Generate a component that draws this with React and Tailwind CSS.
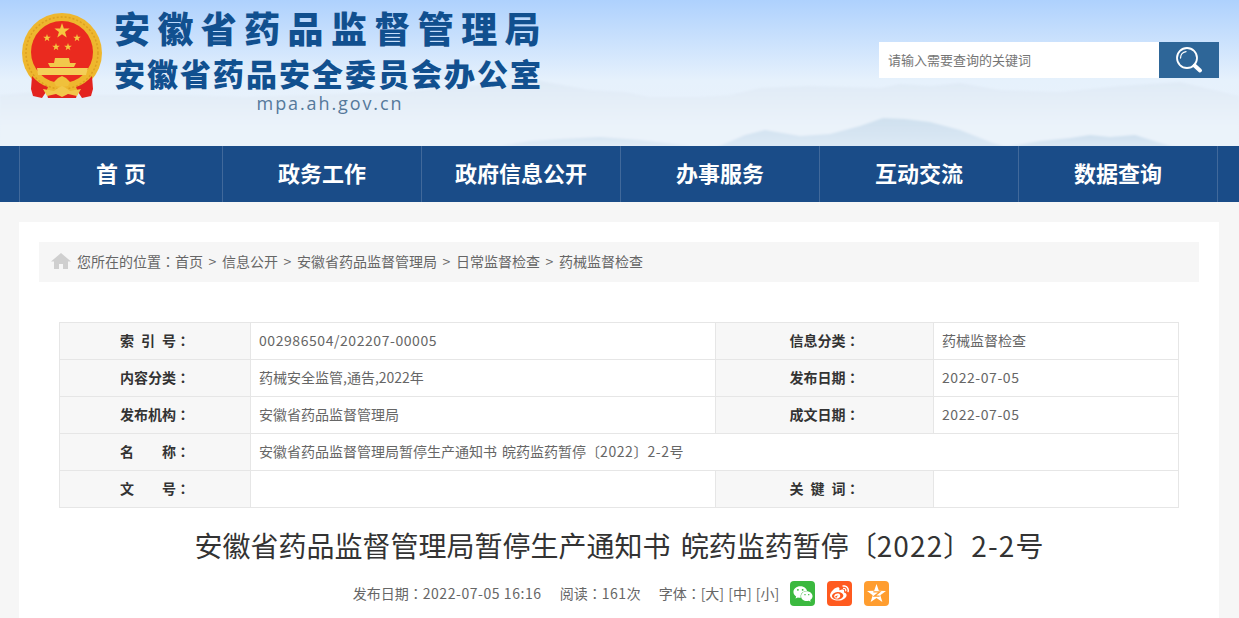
import React from "react";
import { FaWeibo, FaWeixin } from "react-icons/fa";

const navItems = ["首 页", "政务工作", "政府信息公开", "办事服务", "互动交流", "数据查询"];
const crumbs = ["信息公开", "安徽省药品监督管理局", "日常监督检查", "药械监督检查"];

const star = (cx, cy, r) => {
  const pts = [];
  for (let i = 0; i < 10; i++) {
    const rad = i % 2 === 0 ? r : r * 0.4;
    const a = (Math.PI / 5) * i - Math.PI / 2;
    pts.push(`${(cx + rad * Math.cos(a)).toFixed(2)},${(cy + rad * Math.sin(a)).toFixed(2)}`);
  }
  return pts.join(" ");
};

const Emblem = () => (
  <svg width="84" height="90" viewBox="20 10 84 90" className="shrink-0">
    <circle cx="62" cy="52" r="40" fill="#eeb72e" />
    <circle cx="62" cy="52" r="36" fill="none" stroke="#dc9f20" strokeWidth="1.5" strokeDasharray="2 2" />
    <circle cx="62" cy="51" r="31" fill="#ea2a1f" />
    <polygon points={star(62, 30, 8)} fill="#f6c73f" />
    <polygon points={star(47, 37, 4)} fill="#f6c73f" />
    <polygon points={star(77, 37, 4)} fill="#f6c73f" />
    <polygon points={star(56, 46, 4)} fill="#f6c73f" />
    <polygon points={star(68, 46, 4)} fill="#f6c73f" />
    <path d="M48 62 L54 62 L55 57 L69 57 L70 62 L76 62 L74 66 L50 66 Z" fill="#f2c84b" />
    <path d="M37 67 L88 67 L86 74 L38 74 Z" fill="#f4cf58" />
    <path d="M32 75 C36 80 42 84 48 86 L46 91 L42 97 L33 95 L31 88 Z" fill="#e3231f" />
    <path d="M92 75 C88 80 82 84 76 86 L78 91 L82 97 L91 95 L93 88 Z" fill="#e3231f" />
    <path d="M46 90 L78 90 L76 97 L48 97 Z" fill="#e3231f" />
    <path d="M62 75 L66 77 L70 81 L68 85 L62 86 L56 85 L54 81 L58 77 Z" fill="#f0c13c" />
    <path d="M43 88 L54 90 L58 87 L62 85 L66 87 L70 90 L81 88 L77 95 L68 93 L62 96 L56 93 L47 95 Z" fill="#f2c84b" />
  </svg>
);

const SearchIcon = () => (
  <svg width="28" height="28" viewBox="0 0 28 28" fill="none">
    <circle cx="12" cy="12" r="10" stroke="#fff" strokeWidth="1.8" />
    <path d="M5.5 12 A6.5 6.5 0 0 1 11 5.6" stroke="#fff" strokeWidth="1.3" strokeLinecap="round" />
    <path d="M19.5 19.5 L25 24.5" stroke="#fff" strokeWidth="4" strokeLinecap="round" />
  </svg>
);

const Backdrop = () => (
  <svg className="absolute inset-0" width="1239" height="146" viewBox="0 0 1239 146">
    <defs>
      <linearGradient id="ridge" x1="0" y1="0" x2="0" y2="1">
        <stop offset="0" stopColor="#dfeaf6" />
        <stop offset="0.7" stopColor="#ebf3fa" />
      </linearGradient>
      <linearGradient id="hill" x1="0" y1="0" x2="0" y2="1">
        <stop offset="0" stopColor="#cfe0ef" />
        <stop offset="1" stopColor="#dde9f5" />
      </linearGradient>
      <filter id="soft"><feGaussianBlur stdDeviation="0.8" /></filter>
    </defs>
    <g filter="url(#soft)">
      <path d="M0 95 L36 92 L96 95 L186 95 L243 97 L400 92 L535 80 L590 90 L625 92 L650 97 L700 97 L730 95 L760 88 L810 86 L880 88 L900 84 L930 86 L960 83 L1000 90 L1060 92 L1120 86 L1180 82 L1239 96 L1239 146 L0 146 Z" fill="url(#ridge)" />
      <path d="M500 146 L530 141 L560 139 L600 137 L640 140 L690 146 Z" fill="url(#hill)" opacity="0.7" />
      <path d="M715 148 L745 135 L765 130 L800 136 L830 134 L860 126 L883 118 L905 119 L930 122 L960 130 L993 143 L1010 148 Z" fill="url(#hill)" />
      <path d="M1000 148 L1040 141 L1070 138 L1090 135 L1110 137 L1135 135 L1170 146 L1180 148 Z" fill="url(#hill)" />
    </g>
  </svg>
);

// centred full-width colon, the SC face sets it low and to the left
const Colon = () => <span className="font-['Noto_Sans_CJK_TC',sans-serif]">：</span>;
// digits in the reference run wider than Noto's
const Num = ({ children }) => <span className="tracking-[0.04em]">{children}</span>;

const Label = ({ children }) => (
  <td className="bg-[#f7f7f7] border border-[#e6e6e6] pb-[2px] text-center font-bold text-sm text-[#333]">
    {children}
    <Colon />
  </td>
);

const Value = ({ children, span }) => (
  <td colSpan={span} className="border border-[#e6e6e6] pb-[2px] pl-2 text-sm text-[#666]">{children}</td>
);

const FullTitle = () => (
  <span className="[word-spacing:0.14em]">
    安徽省药品监督管理局暂停生产通知书 皖药监药暂停〔<Num>2022</Num>〕<Num>2-2</Num>号
  </span>
);

export default function App() {
  return (
    <div className="h-[618px] overflow-hidden bg-[#f6f6f6] flex flex-col font-['Noto_Sans_CJK_SC','Noto_Sans',sans-serif]">
      {/* header */}
      <header className="relative h-[146px] shrink-0 bg-gradient-to-b from-[#aed1fd] via-[#e6f1fc] via-55% to-[#eaf2fa]">
        <Backdrop />
        <div className="relative flex px-5">
          <div className="pt-[11px]"><Emblem /></div>
          <div className="ml-[10px] w-[426px] text-[#11508f] font-black">
            <div className="text-[36px] leading-[54px] tracking-[7.4px] whitespace-nowrap">安徽省药品监督管理局</div>
            <div className="text-[31px] leading-[38px] tracking-[2px] whitespace-nowrap">安徽省药品安全委员会办公室</div>
            <div className="text-center pl-[6px] text-[18px] leading-[22px] tracking-[1.9px] font-normal text-[#55799b] font-['Open_Sans',sans-serif]">mpa.ah.gov.cn</div>
          </div>
          <div className="ml-auto mt-[42px] flex h-9">
            <div className="w-[280px] bg-white pl-[9px] text-[13px] leading-9 text-[#757575]">请输入需要查询的关键词</div>
            <div className="w-[60px] bg-[#2e6698] flex items-center justify-center"><SearchIcon /></div>
          </div>
        </div>
      </header>

      {/* nav */}
      <nav className="h-14 shrink-0 bg-[#1a4c88] flex pl-[19px]">
        {navItems.map((item, i) => (
          <div
            key={item}
            className={`flex items-center justify-center border-l border-[#41699b] pb-1 text-[22px] font-bold text-white [word-spacing:1px] ${i === 0 ? "w-[203px]" : i === 5 ? "w-[200px] border-r" : "w-[199px]"}`}
          >
            {item}
          </div>
        ))}
      </nav>

      {/* main card */}
      <main className="ml-[19px] w-[1200px] mt-5 flex-1 bg-white px-5 pt-5">
        <div className="h-10 bg-[#f6f6f6] flex items-center pl-3 pb-[2px] text-sm text-[#666]">
          <svg width="20" height="16" viewBox="0 0 20 16" className="mr-[6px]" fill="#cfcfcf">
            <path d="M10 0 L20 8.5 L17 8.5 L17 16 L12 16 L12 11 L8 11 L8 16 L3 16 L3 8.5 L0 8.5 Z" />
          </svg>
          <span>您所在的位置<Colon />首页</span>
          {crumbs.map((c) => (
            <React.Fragment key={c}>
              <span className="w-[19px] text-center">&gt;</span>
              <span>{c}</span>
            </React.Fragment>
          ))}
        </div>

        <div className="mt-10 mx-5">
          <table className="w-[1119px] table-fixed border-collapse">
            <colgroup>
              <col className="w-[191px]" />
              <col className="w-[465px]" />
              <col className="w-[218px]" />
              <col className="w-[245px]" />
            </colgroup>
            <tbody className="[&>tr]:h-[37px]">
              <tr><Label>索{"\u2002"}引{"\u2002"}号</Label><Value><Num>002986504/202207-00005</Num></Value><Label>信息分类</Label><Value>药械监督检查</Value></tr>
              <tr><Label>内容分类</Label><Value>药械安全监管,通告,2022年</Value><Label>发布日期</Label><Value><Num>2022-07-05</Num></Value></tr>
              <tr><Label>发布机构</Label><Value>安徽省药品监督管理局</Value><Label>成文日期</Label><Value><Num>2022-07-05</Num></Value></tr>
              <tr><Label>名{"\u3000\u3000"}称</Label><Value span={3}><FullTitle /></Value></tr>
              <tr><Label>文{"\u3000\u3000"}号</Label><Value></Value><Label>关{"\u2002"}键{"\u2002"}词</Label><Value></Value></tr>
            </tbody>
          </table>
        </div>

        <h1 className="mt-[17px] text-center text-[28px] leading-10 font-normal text-[#333]">
          <FullTitle />
        </h1>

        <div className="mt-4 pl-1 flex items-center justify-center text-sm text-[#666]">
          <span className="pb-[2px]">发布日期<Colon /><Num>2022-07-05 16:16</Num></span>
          <span className="ml-[18px] pb-[2px]">阅读<Colon /><Num>161</Num>次</span>
          <span className="ml-[18px] pb-[2px] [word-spacing:1px]">字体<Colon />[大] [中] [小]</span>
          <span className="ml-[11px] flex h-[25px] w-[25px] items-center justify-center rounded bg-[#3bb93f] text-white"><FaWeixin size={20} /></span>
          <span className="ml-3 flex h-[25px] w-[25px] items-center justify-center rounded bg-[#ff5a1f] text-white"><FaWeibo size={19} /></span>
          <span className="ml-3 flex h-[25px] w-[25px] items-center justify-center rounded bg-[#ff9d2f]">
            <svg width="21" height="21" viewBox="0 0 20 20">
              <polygon points={star(10, 10.5, 9.5)} fill="#fff" />
              <path d="M7 8.5 L13 8.5 L8 12.5 L13 12.5" fill="none" stroke="#ff9d2f" strokeWidth="1.3" />
            </svg>
          </span>
        </div>
      </main>
    </div>
  );
}
